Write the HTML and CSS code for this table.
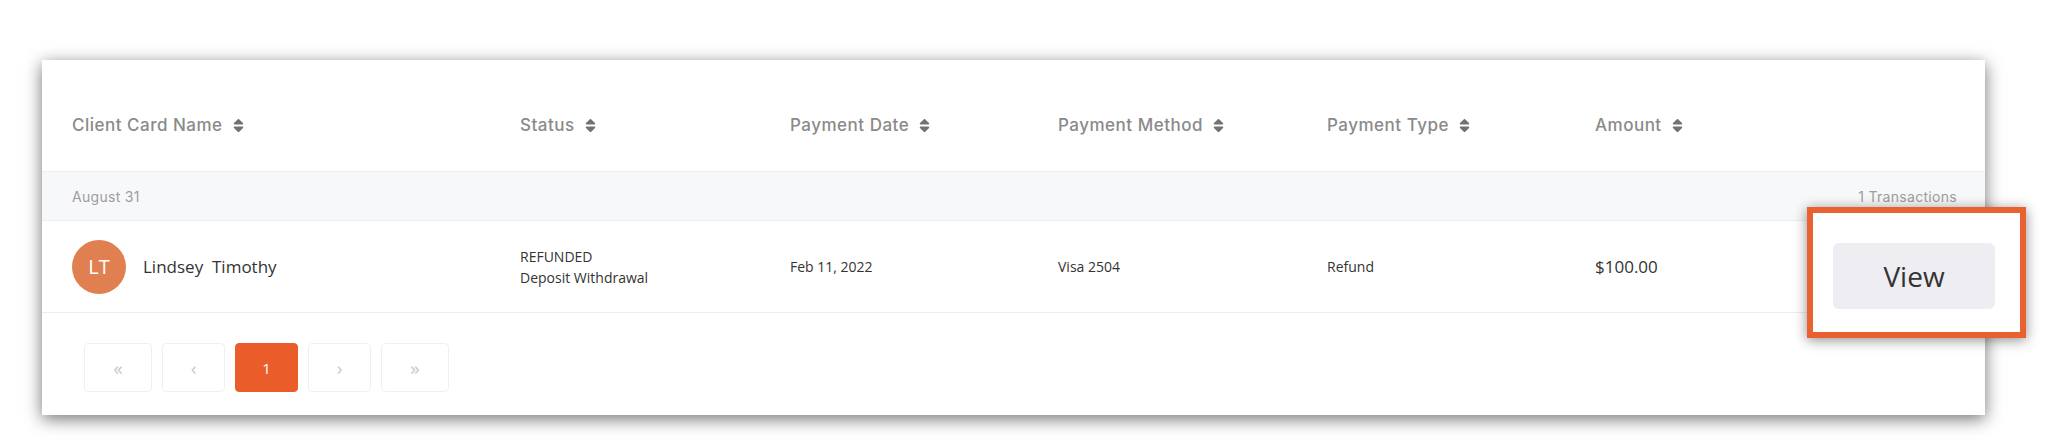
FILE: index.html
```html
<!DOCTYPE html>
<html lang="en">
<head>
<meta charset="utf-8">
<title>Transactions</title>
<link rel="stylesheet" href="styles.css">
</head>
<body>
<div class="page">
  <div class="card">
    <div class="grid head">
      <div class="th">Client Card Name <svg class="sort" viewBox="0 0 320 512"><path d="M41 288h238c21.4 0 32.1 25.9 17 41L177 448c-9.4 9.4-24.6 9.4-33.9 0L24 329c-15.1-15.1-4.4-41 17-41zm255-105L177 64c-9.4-9.4-24.6-9.4-33.9 0L24 183c-15.1 15.1-4.4 41 17 41h238c21.4 0 32.1-25.9 17-41z"/></svg></div>
      <div class="th">Status <svg class="sort" viewBox="0 0 320 512"><path d="M41 288h238c21.4 0 32.1 25.9 17 41L177 448c-9.4 9.4-24.6 9.4-33.9 0L24 329c-15.1-15.1-4.4-41 17-41zm255-105L177 64c-9.4-9.4-24.6-9.4-33.9 0L24 183c-15.1 15.1-4.4 41 17 41h238c21.4 0 32.1-25.9 17-41z"/></svg></div>
      <div class="th">Payment Date <svg class="sort" viewBox="0 0 320 512"><path d="M41 288h238c21.4 0 32.1 25.9 17 41L177 448c-9.4 9.4-24.6 9.4-33.9 0L24 329c-15.1-15.1-4.4-41 17-41zm255-105L177 64c-9.4-9.4-24.6-9.4-33.9 0L24 183c-15.1 15.1-4.4 41 17 41h238c21.4 0 32.1-25.9 17-41z"/></svg></div>
      <div class="th">Payment Method <svg class="sort" viewBox="0 0 320 512"><path d="M41 288h238c21.4 0 32.1 25.9 17 41L177 448c-9.4 9.4-24.6 9.4-33.9 0L24 329c-15.1-15.1-4.4-41 17-41zm255-105L177 64c-9.4-9.4-24.6-9.4-33.9 0L24 183c-15.1 15.1-4.4 41 17 41h238c21.4 0 32.1-25.9 17-41z"/></svg></div>
      <div class="th">Payment Type <svg class="sort" viewBox="0 0 320 512"><path d="M41 288h238c21.4 0 32.1 25.9 17 41L177 448c-9.4 9.4-24.6 9.4-33.9 0L24 329c-15.1-15.1-4.4-41 17-41zm255-105L177 64c-9.4-9.4-24.6-9.4-33.9 0L24 183c-15.1 15.1-4.4 41 17 41h238c21.4 0 32.1-25.9 17-41z"/></svg></div>
      <div class="th">Amount <svg class="sort" viewBox="0 0 320 512"><path d="M41 288h238c21.4 0 32.1 25.9 17 41L177 448c-9.4 9.4-24.6 9.4-33.9 0L24 329c-15.1-15.1-4.4-41 17-41zm255-105L177 64c-9.4-9.4-24.6-9.4-33.9 0L24 183c-15.1 15.1-4.4 41 17 41h238c21.4 0 32.1-25.9 17-41z"/></svg></div>
      <div class="th"></div>
    </div>

    <div class="group">
      <span>August 31</span>
      <span>1 Transactions</span>
    </div>

    <div class="grid row">
      <div class="client">
        <span class="avatar">LT</span>
        <span class="name"><span>Lindsey</span>  <span>Timothy</span></span>
      </div>
      <div class="status">
        <div>REFUNDED</div>
        <div>Deposit Withdrawal</div>
      </div>
      <div class="td">Feb 11, 2022</div>
      <div class="td">Visa 2504</div>
      <div class="td">Refund</div>
      <div class="td amount">$100.00</div>
      <div class="td"></div>
    </div>

    <div class="pager">
      <span class="pg wide">&laquo;</span>
      <span class="pg">&lsaquo;</span>
      <span class="pg active">1</span>
      <span class="pg">&rsaquo;</span>
      <span class="pg wide">&raquo;</span>
    </div>

    <div class="highlight">
      <button class="view">View</button>
    </div>
  </div>
</div>
</body>
</html>
```

FILE: styles.css
```css
* { box-sizing: border-box; }

html, body {
  margin: 0;
  background: #ffffff;
}

.page {
  min-height: 448px;
  padding: 60px 0 33px 42px;
}

.card {
  position: relative;
  width: 1943px;
  height: 355px;
  background: #ffffff;
  box-shadow: 0 4px 16px rgba(0, 0, 0, 0.55);
}

.grid {
  display: grid;
  grid-template-columns: 448px 270px 268px 269px 268px 268px 1fr;
  padding: 0 30px;
}

.head {
  padding-top: 55px;
  padding-bottom: 36px;
  border-bottom: 1px solid #eceef1;
}

.th {
  display: flex;
  align-items: center;
  gap: 10px;
  font-family: Inter, "Noto Sans", sans-serif;
  font-weight: 500;
  font-size: 17px;
  letter-spacing: 0.5px;
  line-height: 20px;
  color: #8a8a8a;
}

.sort {
  width: 11px;
  height: 17px;
  fill: #727272;
}

.group {
  display: flex;
  justify-content: space-between;
  align-items: center;
  height: 49px;
  padding: 0 28px 0 30px;
  background: #f7f8fa;
  border-bottom: 1px solid #eceef1;
  font-family: Inter, "Noto Sans", sans-serif;
  font-size: 14px;
  letter-spacing: 0.3px;
  color: #9d9d9d;
}

.row {
  height: 92px;
  align-items: center;
  border-bottom: 1px solid #eceef1;
  font-family: "Open Sans", "Noto Sans", sans-serif;
  font-size: 14px;
  color: #333333;
}

.client {
  display: flex;
  align-items: center;
  gap: 17px;
}

.avatar {
  width: 54px;
  height: 54px;
  border-radius: 50%;
  background: #e07f4f;
  color: #ffffff;
  display: flex;
  align-items: center;
  justify-content: center;
  font-size: 20px;
}

.name {
  font-size: 17px;
  color: #333333;
  white-space: pre;
}

.status {
  line-height: 21px;
}

.amount {
  font-size: 17px;
}

.pager {
  display: flex;
  gap: 10px;
  padding: 30px 0 0 42px;
}

.pg {
  width: 63px;
  height: 49px;
  display: flex;
  align-items: center;
  justify-content: center;
  border: 1px solid #eef0f3;
  border-radius: 4px;
  font-family: "Open Sans", sans-serif;
  font-size: 19px;
  color: #c5c8d3;
}

.pg.wide {
  width: 68px;
}

.pg.active {
  background: #ea5d2a;
  border-color: #ea5d2a;
  color: #ffffff;
  font-size: 15px;
}

.highlight {
  position: absolute;
  left: 1765px;
  top: 147px;
  width: 219px;
  height: 131px;
  border: 6px solid #e8612e;
  background: #ffffff;
  box-shadow: 0 2px 12px rgba(0, 0, 0, 0.45);
  padding: 30px 0 0 20px;
}

.view {
  display: flex;
  align-items: center;
  justify-content: center;
  width: 162px;
  height: 66px;
  border: none;
  border-radius: 6px;
  background: #ededf2;
  font-family: "Open Sans", sans-serif;
  font-size: 28px;
  color: #333333;
  padding: 0;
}
```
